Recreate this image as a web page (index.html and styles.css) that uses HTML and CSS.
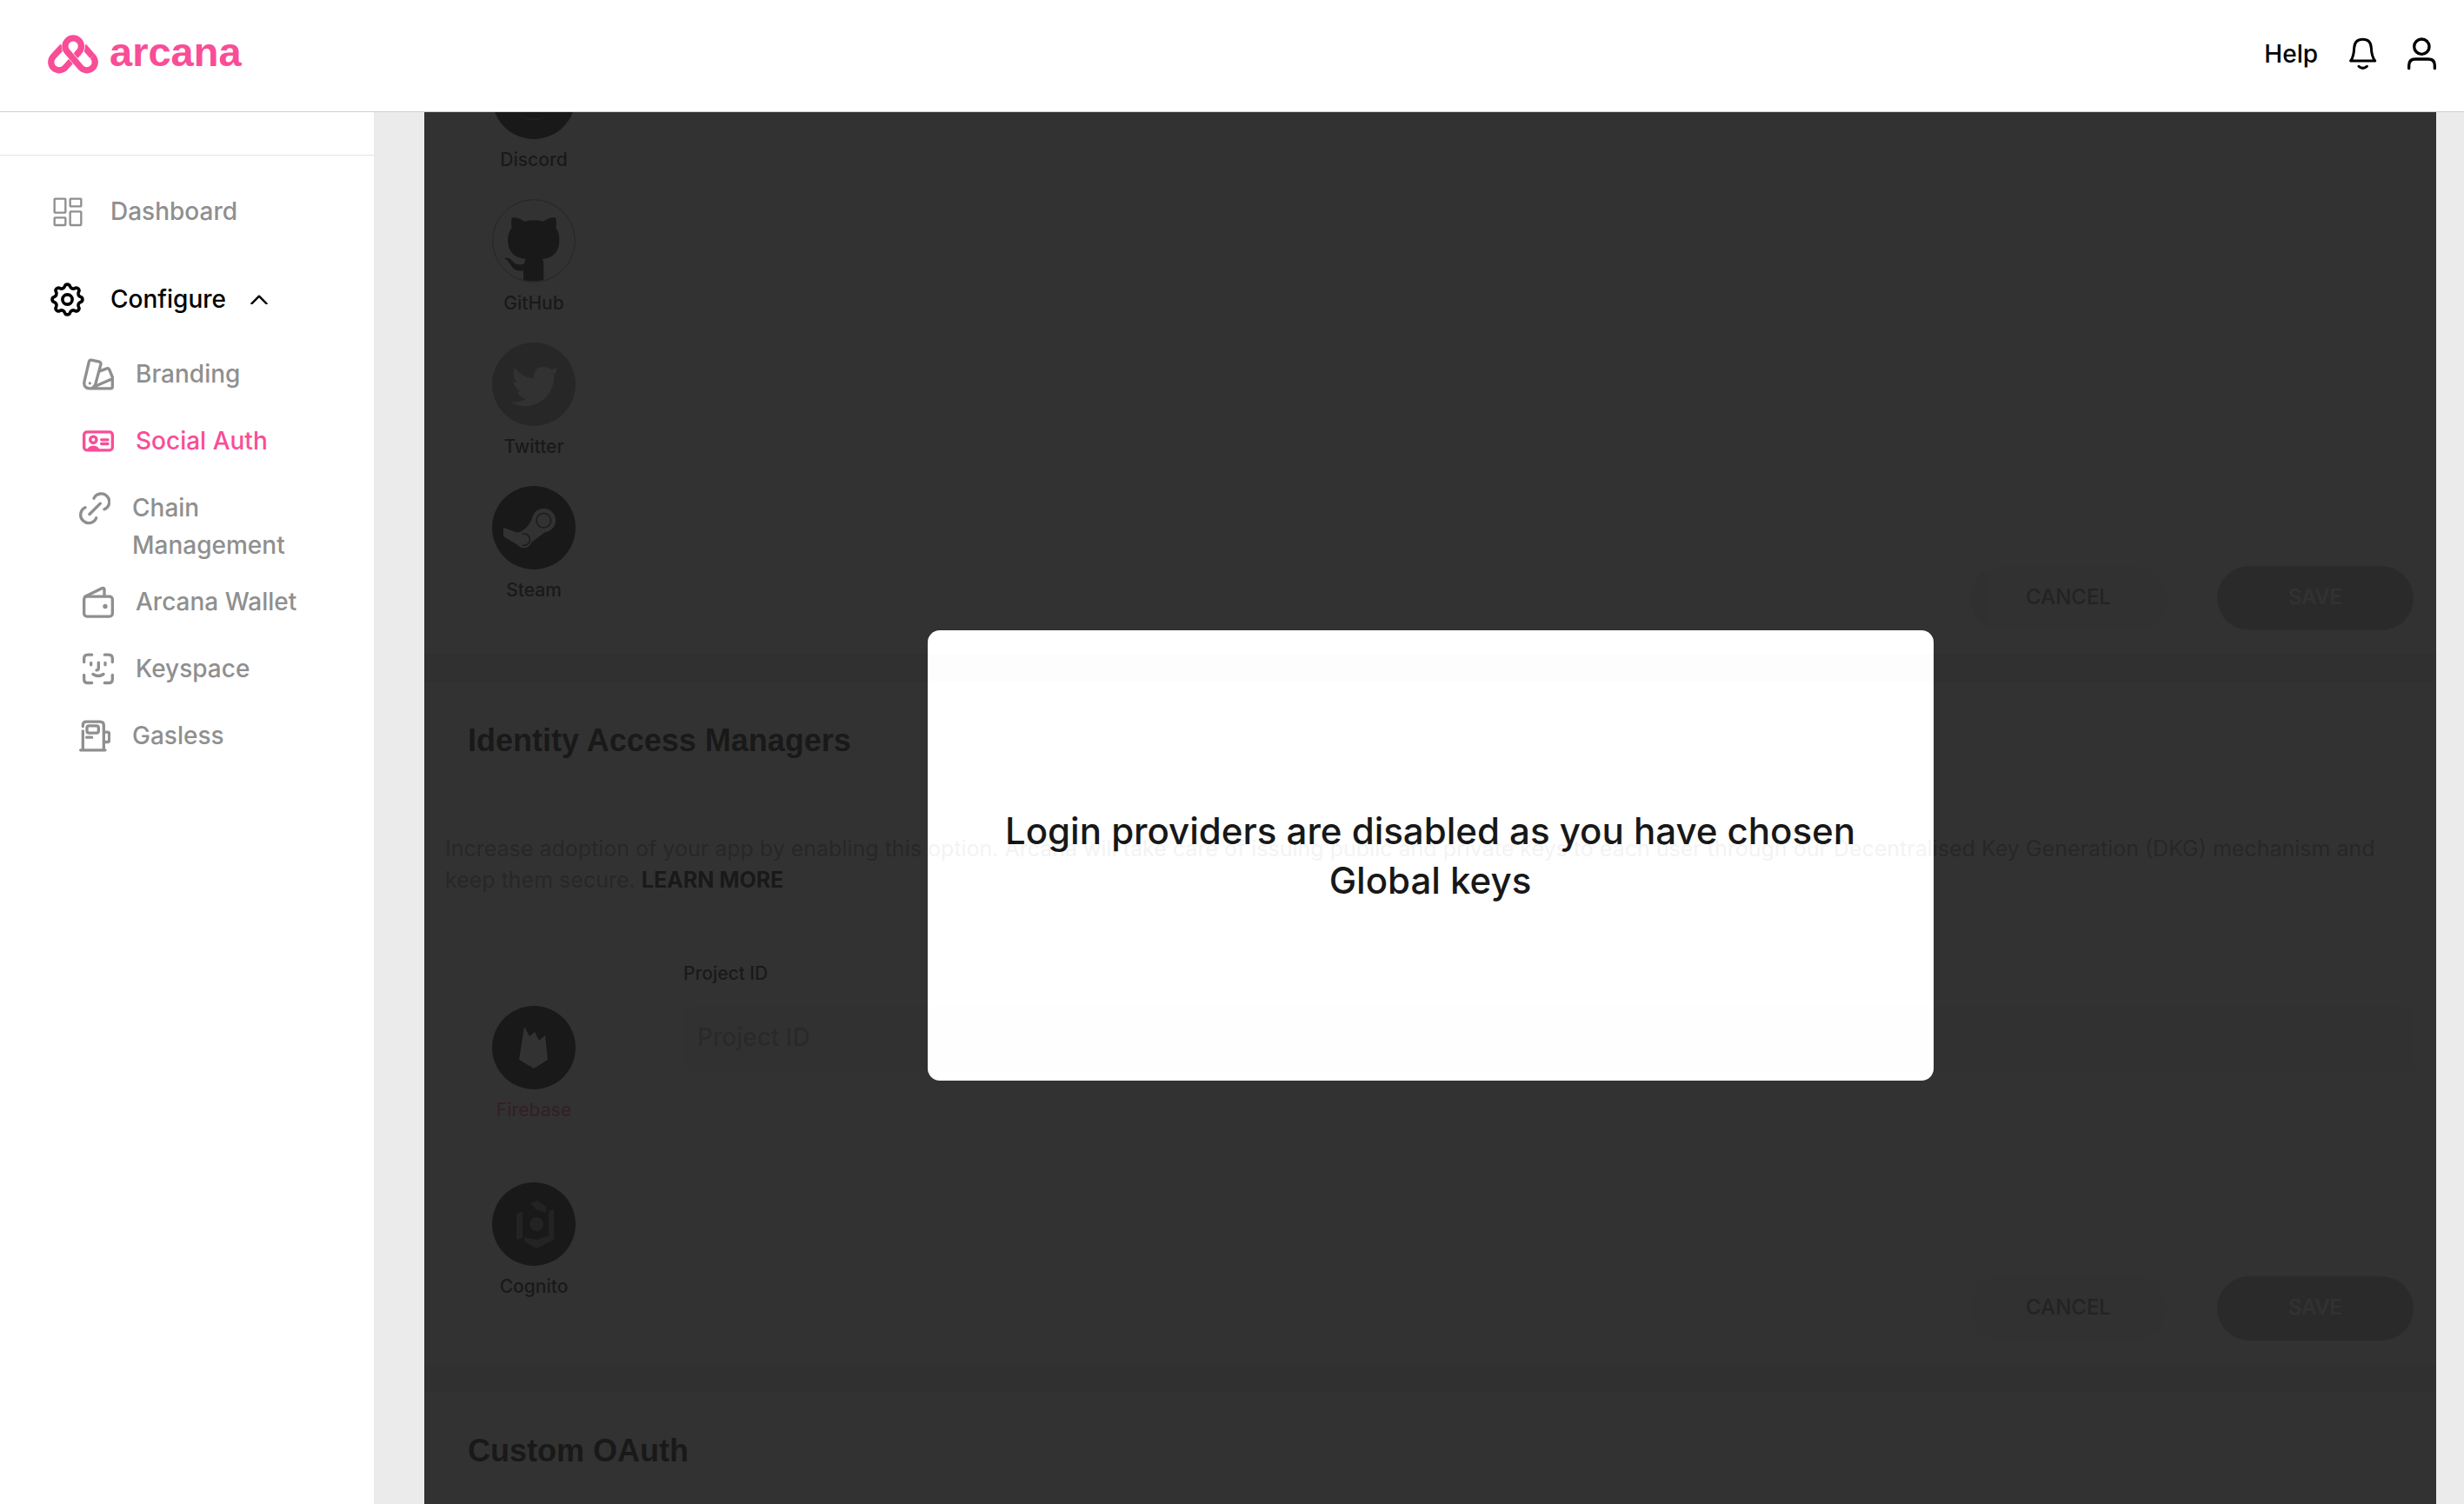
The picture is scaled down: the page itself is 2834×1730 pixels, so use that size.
FILE: index.html
```html
<!DOCTYPE html>
<html lang="en">
<head>
<meta charset="utf-8">
<meta name="viewport" content="width=device-width, initial-scale=1">
<title>Arcana – Social Auth</title>
<link rel="stylesheet" href="styles.css">
</head>
<body>
<header class="topbar">
  <a class="brand" href="#">
    <svg class="brand-mark" viewBox="18 22 168 130" aria-hidden="true">
      <path class="brand-line" d="M66 59 L34 94 A27 27 0 0 0 74 134 L122 80"/>
      <path class="brand-line" d="M139 59 L170 94"/>
      <path class="brand-gap" d="M122 80 A28 28 0 1 0 82 78 L130 134"/>
      <path class="brand-line" d="M118 84 L124 77 A28 28 0 1 0 82 78 L130 134 A27 27 0 0 0 170 94"/>
    </svg>
    <span class="brand-name">arcana</span>
  </a>
  <nav class="topbar-actions" aria-label="Account">
    <a class="help-link" href="#">Help</a>
    <button class="icon-button bell-button" type="button" aria-label="Notifications">
      <svg viewBox="598 131 99 114"><path d="M606 212 H690 Q678 197 677 167 Q675 138 648 138 Q620 138 618 167 Q617 197 606 212Z M634 231 Q648 243 662 231"/></svg>
    </button>
    <button class="icon-button" type="button" aria-label="Profile">
      <svg viewBox="807 131 99 114"><circle cx="856" cy="163" r="26"/><path d="M812 238 V228 Q812 206 834 206 H879 Q901 206 901 228 V238"/></svg>
    </button>
  </nav>
</header>

<div class="layout">
  <aside class="sidebar">
    <div class="sidebar-top"></div>
    <nav class="menu" aria-label="Main">
      <a class="menu-link" href="#">
        <span class="menu-icon"><svg class="icon-dashboard" viewBox="182 680 102 102" aria-hidden="true"><rect x="187" y="685" width="38" height="48" rx="2"/><rect x="241" y="685" width="38" height="26" rx="2"/><rect x="187" y="750" width="38" height="26" rx="2"/><rect x="241" y="729" width="38" height="47" rx="2"/></svg></span>
        Dashboard
      </a>
      <a class="menu-link is-open" href="#">
        <span class="menu-icon"><svg class="icon-gear" viewBox="-59 -59 118 118" aria-hidden="true"><path d="M46 -9 A9.4 9.4 0 0 1 46 9 A12 12 0 0 0 39 26 A9.4 9.4 0 0 1 26 39 A12 12 0 0 0 9 46 A9.4 9.4 0 0 1 -9 46 A12 12 0 0 0 -26 39 A9.4 9.4 0 0 1 -39 26 A12 12 0 0 0 -46 9 A9.4 9.4 0 0 1 -46 -9 A12 12 0 0 0 -39 -26 A9.4 9.4 0 0 1 -26 -39 A12 12 0 0 0 -9 -46 A9.4 9.4 0 0 1 9 -46 A12 12 0 0 0 26 -39 A9.4 9.4 0 0 1 39 -26 A12 12 0 0 0 46 -9Z"/><circle r="17"/></svg></span>
        Configure
        <svg class="icon-chevron" viewBox="866 1016 58 34" aria-hidden="true"><path d="M870 1046 L895 1021 L920 1046"/></svg>
      </a>
      <ul class="submenu">
        <li><a class="submenu-link" href="#">
          <svg viewBox="32 36 108 108" aria-hidden="true"><path d="M62 41 L90 47 Q96 49 95 55 L77 122 Q72 140 55 139 Q34 137 38 115 L54 47 Q56 40 62 41Z M91 79 L116 70 Q121 68 124 73 L135 100 V133 Q135 139 129 139 H55 M76 131 L134 106"/><circle class="dot" cx="57" cy="121" r="5"/></svg>
          Branding</a></li>
        <li><a class="submenu-link is-active" href="#" aria-current="page">
          <svg viewBox="32 268 108 108" aria-hidden="true"><rect x="37" y="290" width="98" height="63" rx="10"/><circle cx="69" cy="317" r="11"/><path d="M97 317 H119 M97 331 H119"/><path class="dot" d="M46 355 Q50 338 69 338 Q88 338 92 355Z"/></svg>
          Social Auth</a></li>
        <li><a class="submenu-link submenu-link--wide" href="#">
          <svg viewBox="25 493 108 108" aria-hidden="true"><path d="M76 513 A28 28 0 1 1 112 551 M46 545 A28 28 0 1 0 84 581 M61 568 L98 531"/></svg>
          <span>Chain<br>Management</span></a></li>
        <li class="submenu-after-wrap"><a class="submenu-link" href="#">
          <svg viewBox="32 822 108 108" aria-hidden="true"><rect x="37" y="857" width="98" height="69" rx="10"/><path d="M40 857 L100 828 Q107 826 107 833 V855"/><circle class="dot" cx="110" cy="891" r="8"/></svg>
          Arcana Wallet</a></li>
        <li><a class="submenu-link" href="#">
          <svg viewBox="32 1055 108 108" aria-hidden="true"><path d="M64 1060 H50 Q37 1060 37 1073 V1085 M108 1060 H122 Q135 1060 135 1073 V1085 M37 1130 V1144 Q37 1157 50 1157 H64 M135 1130 V1144 Q135 1157 122 1157 H108 M61 1088 V1095 M110 1088 V1095 M87 1087 V1106 Q87 1113 80 1113 M68 1127 Q86 1139 104 1127"/></svg>
          Keyspace</a></li>
        <li><a class="submenu-link submenu-link--wide" href="#">
          <svg viewBox="96 1335 108 108" aria-hidden="true"><path d="M109 1356 V1352 Q109 1340 121 1340 H168 Q181 1340 181 1353 V1436 M109 1372 V1436 M101 1438 H186 M122 1394 H140 M184 1376 H194 Q200 1376 200 1382 V1404 Q200 1410 194 1410 H184"/><rect x="123" y="1354" width="40" height="25" rx="7"/></svg>
          Gasless</a></li>
      </ul>
    </nav>
  </aside>

  <main class="main">
    <div class="panels">
      <section class="card card--scrolled" aria-label="Social providers">
        <div class="card-body">
          <div class="providers">
            <button class="provider" type="button">
              <svg viewBox="-48 -48 96 96" aria-hidden="true"><circle r="48"/><path fill="#555" d="M-17 22 Q0 27 17 22 Q8 26 0 26 Q-8 26 -17 22Z"/></svg>
              Discord</button>
            <button class="provider" type="button">
              <svg viewBox="258 331 288 288" aria-hidden="true"><circle cx="402" cy="475" r="142" fill="#fff" stroke="#777" stroke-width="3"/><path d="M326 395 Q345 392 370 408 Q402 400 435 408 Q458 392 477 395 Q482 415 478 430 Q491 447 490 475 Q488 532 432 538 Q437 548 436 565 V610 Q402 618 366 610 V578 Q335 582 322 558 Q314 542 300 534 Q318 530 328 545 Q340 562 368 555 Q370 545 374 538 Q314 532 312 475 Q312 447 326 430 Q322 412 326 395Z"/></svg>
              GitHub</button>
            <button class="provider" type="button">
              <svg viewBox="258 44 288 288" aria-hidden="true"><circle cx="402" cy="188" r="144" fill="#8f8f8f"/><path fill="#fff" d="M336 130 Q362 165 403 168 Q398 130 434 128 Q450 128 460 137 L482 132 Q482 145 471 155 Q473 212 432 243 Q380 280 325 250 Q355 252 374 238 Q352 232 346 214 L358 212 Q332 200 332 178 L345 181 Q324 160 336 130Z"/></svg>
              Twitter</button>
            <button class="provider" type="button">
              <svg viewBox="258 541 288 288" aria-hidden="true"><circle cx="402" cy="685" r="144"/><g fill="#fff"><circle cx="436" cy="660" r="41"/><circle cx="368" cy="728" r="27"/><path d="M297 684 L345 702 Q372 700 397 655 L440 701 L392 737 L352 748 L297 715Z"/></g><g fill="none" stroke="#222" stroke-width="5"><circle cx="436" cy="660" r="25"/><path d="M362 707 A20 20 0 1 1 362 745"/></g></svg>
              Steam</button>
          </div>
          <div class="card-content">
            <div class="actions">
              <button class="btn btn--cancel" type="button">CANCEL</button>
              <button class="btn btn--save" type="button">SAVE</button>
            </div>
          </div>
        </div>
      </section>

      <section class="card" aria-labelledby="iam-title">
        <h2 class="card-title" id="iam-title">Identity Access Managers</h2>
        <p class="card-text">Increase adoption of your app by enabling this option. Arcana will take care of issuing public and private keys to each user through our Decentralised Key Generation (DKG) mechanism and keep them secure. <a class="learn-more" href="#">LEARN MORE</a></p>
        <div class="card-body">
          <div class="providers providers--spaced">
            <button class="provider is-selected" type="button">
              <svg viewBox="-48 -48 96 96" aria-hidden="true"><circle r="48"/><path fill="#fff" d="M-17 14 L-11 -24 L-5 -13 L1 -18 L6 -8 L13 -14 L16 14 L0 24Z"/></svg>
              Firebase</button>
            <button class="provider" type="button">
              <svg viewBox="-48 -48 96 96" aria-hidden="true"><circle r="48"/><g fill="#6a6a6a"><path d="M-4 -24 L4 -27 L14 -20 V-13 L2 -17Z M-20 -12 L-13 -14 V16 L-20 18Z M17 -15 L23 -17 V13 L17 12Z M-11 15 L3 18 L23 11 V18 L3 28 L-11 20Z"/><circle cx="3" cy="0" r="8"/></g></svg>
              Cognito</button>
          </div>
          <div class="card-content">
            <div class="field">
              <label class="field-label" for="project-id">Project ID</label>
              <input class="field-input" id="project-id" type="text" placeholder="Project ID">
            </div>
            <div class="actions">
              <button class="btn btn--cancel" type="button">CANCEL</button>
              <button class="btn btn--save" type="button">SAVE</button>
            </div>
          </div>
        </div>
      </section>

      <section class="card" aria-labelledby="oauth-title">
        <h2 class="card-title" id="oauth-title">Custom OAuth</h2>
      </section>
    </div>

    <div class="overlay">
      <div class="dialog" role="dialog" aria-labelledby="dialog-text">
        <p class="dialog-text" id="dialog-text">Login providers are disabled as you have chosen Global keys</p>
      </div>
    </div>
  </main>
</div>
</body>
</html>
```
FILE: styles.css
```css
:root {
  --pink: #f94d97;
  --muted: #8f8f8f;
  --page: #ebebeb;
}

* {
  box-sizing: border-box;
}

body {
  display: flex;
  flex-direction: column;
  height: 100vh;
  margin: 0;
  overflow: hidden;
  background: var(--page);
  color: #000;
  font-family: "Inter", sans-serif;
  font-size: 28px;
  font-weight: 450;
}

a {
  color: inherit;
  text-decoration: none;
}

button {
  padding: 0;
  border: 0;
  background: none;
  color: inherit;
  font: inherit;
}

svg {
  display: block;
  flex: none;
}

/* Top bar */
.topbar {
  position: relative;
  z-index: 2;
  display: flex;
  flex: none;
  align-items: center;
  justify-content: space-between;
  height: 129px;
  padding: 0 32px 4px 56px;
  border-bottom: 1px solid #cfcfcf;
  background: #fff;
}

.brand {
  display: flex;
  align-items: center;
  gap: 14px;
  color: var(--pink);
}

.brand-mark {
  width: 56px;
  height: 43px;
  fill: none;
  overflow: visible;
}

.brand-line {
  stroke: var(--pink);
  stroke-width: 22;
}

.brand-gap {
  stroke: #fff;
  stroke-width: 26;
}

.brand-name {
  padding-bottom: 5px;
  font: 700 47px/48px "Liberation Sans", sans-serif;
}

.topbar-actions {
  display: flex;
  align-items: center;
  gap: 35px;
}

.help-link {
  line-height: 38px;
}

.icon-button svg {
  width: 33px;
  height: 38px;
  fill: none;
  stroke: #000;
  stroke-width: 10;
  stroke-linecap: round;
  stroke-linejoin: round;
}

.bell-button svg {
  stroke-width: 9;
}

/* Sidebar */
.layout {
  display: grid;
  flex: 1;
  grid-template-columns: 430px 1fr;
  min-height: 0;
}

.sidebar {
  background: #fff;
}

.sidebar-top {
  height: 50px;
  border-bottom: 1px solid #e3e3e3;
}

.menu {
  display: flex;
  flex-direction: column;
  padding-top: 43px;
  color: var(--muted);
  line-height: 43px;
}

.menu-link {
  display: flex;
  align-items: center;
  margin-bottom: 58px;
  padding-left: 58px;
}

.menu-link.is-open {
  margin-bottom: 43px;
  color: #000;
}

.menu-icon {
  display: grid;
  width: 39px;
  margin-right: 30px;
  place-items: center;
}

.menu svg {
  fill: none;
  stroke: currentColor;
  stroke-linecap: round;
  stroke-linejoin: round;
}

.menu .icon-dashboard {
  width: 34px;
  stroke-width: 7;
}

.menu .icon-gear {
  width: 39px;
  stroke-width: 11;
}

.menu .icon-chevron {
  width: 20px;
  margin-left: 28px;
  stroke-width: 7;
}

.submenu {
  display: flex;
  flex-direction: column;
  gap: 34px;
  margin: 0;
  padding: 0;
  list-style: none;
}

.submenu-link {
  display: flex;
  gap: 25px;
  padding-left: 95px;
}

.submenu-link--wide {
  padding-left: 91px;
}

.submenu-after-wrap {
  margin-top: -12px;
}

.submenu-link.is-active {
  color: var(--pink);
}

.submenu-link svg {
  width: 36px;
  height: 43px;
  stroke-width: 10;
}

.submenu-link .dot {
  fill: currentColor;
  stroke: none;
}

/* Provider panels */
.main {
  position: relative;
  min-width: 0;
  margin: 0 32px 0 58px;
  overflow: hidden;
}

.panels {
  display: flex;
  flex-direction: column;
  gap: 32px;
  margin-top: -65px;
}

.card {
  min-height: 280px;
  padding: 46px 26px 27px 24px;
  background: #fff;
}

.card--scrolled {
  padding-top: 0;
}

.card-title {
  margin: 0 0 84px;
  padding-left: 26px;
  font: 700 36px/44px "Liberation Sans", sans-serif;
}

.card-text {
  margin: 0 0 80px;
  color: #8d8d8d;
  font-size: 25px;
  font-weight: 400;
  line-height: 36px;
}

.learn-more {
  color: #000;
  font-weight: 700;
}

.card-body {
  display: grid;
  grid-template-columns: 204px 1fr;
  gap: 70px;
}

.providers {
  display: flex;
  flex-direction: column;
  align-items: center;
  gap: 32px;
  margin-bottom: 6px;
  padding-bottom: 27px;
  background: #f9f9f9;
}

.providers--spaced {
  gap: 70px;
  padding: 47px 0 43px;
}

.provider {
  display: flex;
  flex-direction: column;
  align-items: center;
  gap: 10px;
  font-size: 21px;
  line-height: 27px;
}

.provider.is-selected {
  color: #ff4e9f;
}

.provider svg {
  width: 96px;
  height: 96px;
}

.card-content {
  display: flex;
  flex-direction: column;
}

.field {
  display: flex;
  flex-direction: column;
  gap: 27px;
}

.field-label {
  font-size: 21px;
  line-height: 20px;
}

.field-input {
  width: 100%;
  height: 76px;
  padding: 0 16px 4px;
  border: 0;
  border-radius: 10px;
  background: #f5f5f5;
  font: inherit;
}

.field-input::placeholder {
  color: #a5a5a5;
  opacity: 1;
}

.actions {
  display: flex;
  gap: 58px;
  justify-content: flex-end;
  margin-top: auto;
}

.btn {
  width: 226px;
  height: 74px;
  padding-bottom: 4px;
  border-radius: 37px;
  font-size: 24px;
}

.btn--cancel {
  background: #f0f0f0;
  color: #6a6a6a;
}

.btn--save {
  background: #b0b0b0;
  color: #fff;
}

/* Disabled-state overlay */
.overlay {
  position: absolute;
  inset: 0;
  display: grid;
  padding-top: 108px;
  background: #1c1c1c;
  opacity: 0.9;
  place-items: center;
}

.dialog {
  display: grid;
  width: 50%;
  min-height: 518px;
  padding: 40px 80px;
  border-radius: 14px;
  background: #fff;
  place-items: center;
}

.dialog-text {
  margin: 0;
  font-size: 42px;
  line-height: 57px;
  text-align: center;
}
```
